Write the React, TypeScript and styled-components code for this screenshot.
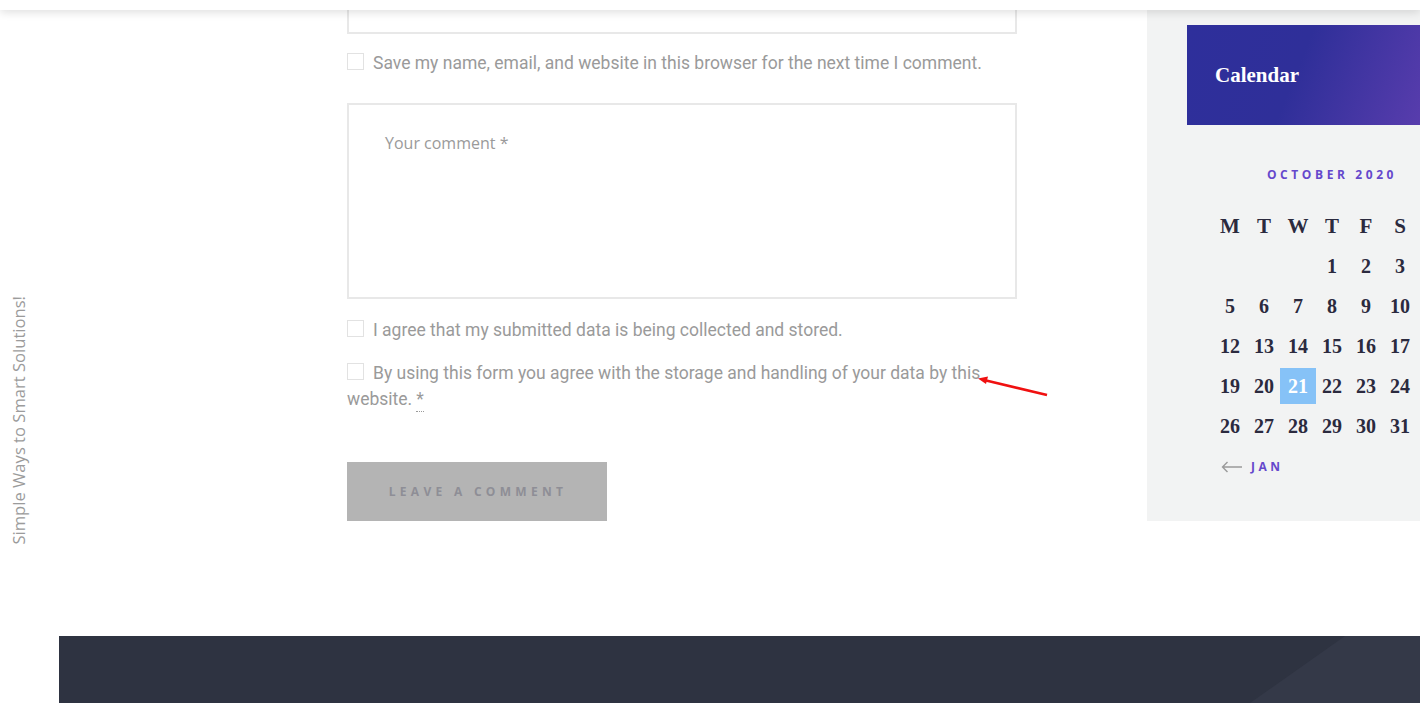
import React from 'react';
import styled, { createGlobalStyle } from 'styled-components';

const GlobalStyle = createGlobalStyle`
  html, body {
    margin: 0;
    padding: 0;
    background: #ffffff;
  }
  body {
    font-family: Roboto, 'Open Sans', sans-serif;
  }
`;

const Page = styled.div`
  position: relative;
  width: 1420px;
  height: 703px;
  overflow: hidden;
  display: flex;
`;

const TopBar = styled.div`
  position: absolute;
  top: 0;
  left: 0;
  right: 0;
  height: 10px;
  background: #ffffff;
  box-shadow: 0 2px 10px rgba(0, 0, 0, 0.14);
  z-index: 5;
`;

const Rail = styled.aside`
  width: 59px;
  flex: none;
  display: flex;
  justify-content: center;
  padding-top: 296px;
  box-sizing: border-box;
`;

const Tagline = styled.span`
  writing-mode: vertical-rl;
  transform: rotate(180deg);
  height: max-content;
  font-family: 'Open Sans', sans-serif;
  font-size: 16.6px;
  color: #9b9b9b;
  margin-right: 22px;
  white-space: nowrap;
`;

const Main = styled.div`
  flex: 1;
  display: flex;
  flex-direction: column;
  min-width: 0;
`;

const TopRow = styled.div`
  display: flex;
  height: 521px;
`;

const FormCol = styled.form`
  width: 670px;
  margin-left: 288px;
  flex: none;
  display: flex;
  flex-direction: column;
`;

const InputStub = styled.div`
  height: 32px;
  flex: none;
  border: 2px solid #e8e8e8;
  border-top: none;
`;

const CheckRow = styled.label<{ $gap: number }>`
  display: block;
  margin-top: ${(p) => p.$gap}px;
  padding-top: 1px;
  font-family: Roboto, sans-serif;
  font-size: 17.5px;
  line-height: 26px;
  color: #9a9a9a;
`;

const Box = styled.span`
  display: inline-block;
  width: 15px;
  height: 15px;
  border: 1px solid #e2e2e2;
  background: #fff;
  margin-right: 9px;
  vertical-align: -1px;
`;

const Required = styled.abbr`
  text-decoration: none;
  border-bottom: 1px dotted #9a9a9a;
  padding-bottom: 2px;
  margin-left: 4px;
`;

const CommentBox = styled.div`
  margin-top: 27px;
  flex: none;
  height: 196px;
  box-sizing: border-box;
  border: 2px solid #e8e8e8;
  padding: 27px 36px;
  font-family: 'Open Sans', sans-serif;
  font-size: 16px;
  color: #9a9a9a;
`;

const SubmitButton = styled.button`
  margin-top: 50px;
  flex: none;
  width: 260px;
  height: 59px;
  border: none;
  background: #b4b4b4;
  color: #8e8e96;
  font-family: 'Open Sans', sans-serif;
  font-weight: 700;
  font-size: 12px;
  letter-spacing: 4.3px;
  text-transform: uppercase;
  padding: 0 0 0 2px;
`;

const Sidebar = styled.aside`
  margin-left: 130px;
  flex: 1;
  background: #f2f3f3;
  padding: 25px 0 0 40px;
  overflow: hidden;
`;

const WidgetHead = styled.div`
  width: 280px;
  height: 100px;
  box-sizing: border-box;
  padding-left: 28px;
  display: flex;
  align-items: center;
  background: linear-gradient(112deg, #2e2f9b 0%, #2f2f99 40%, #6541b3 100%);
  font-family: 'Liberation Serif', serif;
  font-weight: 700;
  font-size: 21px;
  color: #ffffff;
`;

const Calendar = styled.div`
  margin: 41px 0 0 26px;
  width: 238px;
`;

const Caption = styled.div`
  text-align: center;
  font-family: 'Open Sans', sans-serif;
  font-weight: 700;
  font-size: 12px;
  letter-spacing: 3.6px;
  color: #6548cc;
  height: 18px;
  line-height: 18px;
  margin-bottom: 22px;
`;

const Grid = styled.div`
  display: grid;
  grid-template-columns: repeat(7, 34px);
  grid-auto-rows: 40px;
`;

const Cell = styled.div<{ $head?: boolean; $today?: boolean }>`
  display: flex;
  align-items: center;
  justify-content: center;
  font-family: 'Liberation Serif', serif;
  font-weight: 700;
  font-size: ${(p) => (p.$head ? 21 : 20)}px;
  color: #2b2a3e;
  & > span {
    width: 36px;
    height: 36px;
    display: flex;
    align-items: center;
    justify-content: center;
    flex: none;
    background: ${(p) => (p.$today ? '#86c2f7' : 'transparent')};
    color: ${(p) => (p.$today ? '#ffffff' : 'inherit')};
  }
`;

const Nav = styled.a`
  display: flex;
  align-items: center;
  gap: 8px;
  margin: 12px 0 0 8px;
  font-family: 'Open Sans', sans-serif;
  font-weight: 700;
  font-size: 12px;
  letter-spacing: 3.5px;
  color: #6548cc;
  text-decoration: none;
`;

const Footer = styled.footer`
  position: relative;
  margin-top: 115px;
  height: 67px;
  background: #2e3341;
  overflow: hidden;
  &::after {
    content: '';
    position: absolute;
    inset: 0;
    background: #343948;
    clip-path: polygon(1286px 0, 100% 0, 100% 100%, 1191px 100%);
  }
`;

const Marker = styled.svg`
  position: absolute;
  left: 970px;
  top: 370px;
  z-index: 4;
`;

const heads = ['M', 'T', 'W', 'T', 'F', 'S', 'S'];
const days: (number | null)[] = [
  null, null, null, 1, 2, 3, 4,
  5, 6, 7, 8, 9, 10, 11,
  12, 13, 14, 15, 16, 17, 18,
  19, 20, 21, 22, 23, 24, 25,
  26, 27, 28, 29, 30, 31, null,
];

export default function App() {
  return (
    <>
      <GlobalStyle />
      <Page>
        <TopBar />
        <Rail>
          <Tagline>Simple Ways to Smart Solutions!</Tagline>
        </Rail>
        <Main>
          <TopRow>
            <FormCol onSubmit={(e) => e.preventDefault()}>
              <InputStub />
              <CheckRow $gap={15}>
                <Box />
                Save my name, email, and website in this browser for the next time I comment.
              </CheckRow>
              <CommentBox>Your comment *</CommentBox>
              <CheckRow $gap={17}>
                <Box />
                I agree that my submitted data is being collected and stored.
              </CheckRow>
              <CheckRow $gap={16}>
                <Box />
                By using this form you agree with the storage and handling of your data by this
                website.<Required title="required">*</Required>
              </CheckRow>
              <SubmitButton type="submit">Leave a comment</SubmitButton>
            </FormCol>
            <Sidebar>
              <WidgetHead>Calendar</WidgetHead>
              <Calendar>
                <Caption>OCTOBER 2020</Caption>
                <Grid>
                  {heads.map((h, i) => (
                    <Cell key={'h' + i} $head>
                      <span>{h}</span>
                    </Cell>
                  ))}
                  {days.map((d, i) => (
                    <Cell key={i} $today={d === 21}>
                      <span>{d ?? ''}</span>
                    </Cell>
                  ))}
                </Grid>
                <Nav href="#">
                  <svg width="22" height="12" viewBox="0 0 22 12">
                    <path d="M21 6H1.5M6.5 1L1.5 6l5 5" fill="none" stroke="#9a9a9a" strokeWidth="1.4" />
                  </svg>
                  JAN
                </Nav>
              </Calendar>
            </Sidebar>
          </TopRow>
          <Footer />
        </Main>
        <Marker width="80" height="30" viewBox="0 0 80 30">
          <path d="M77 25L14 10" stroke="#f01010" strokeWidth="2.6" />
          <path d="M8 8.5L18 6.5L16 14Z" fill="#f01010" />
        </Marker>
      </Page>
    </>
  );
}
